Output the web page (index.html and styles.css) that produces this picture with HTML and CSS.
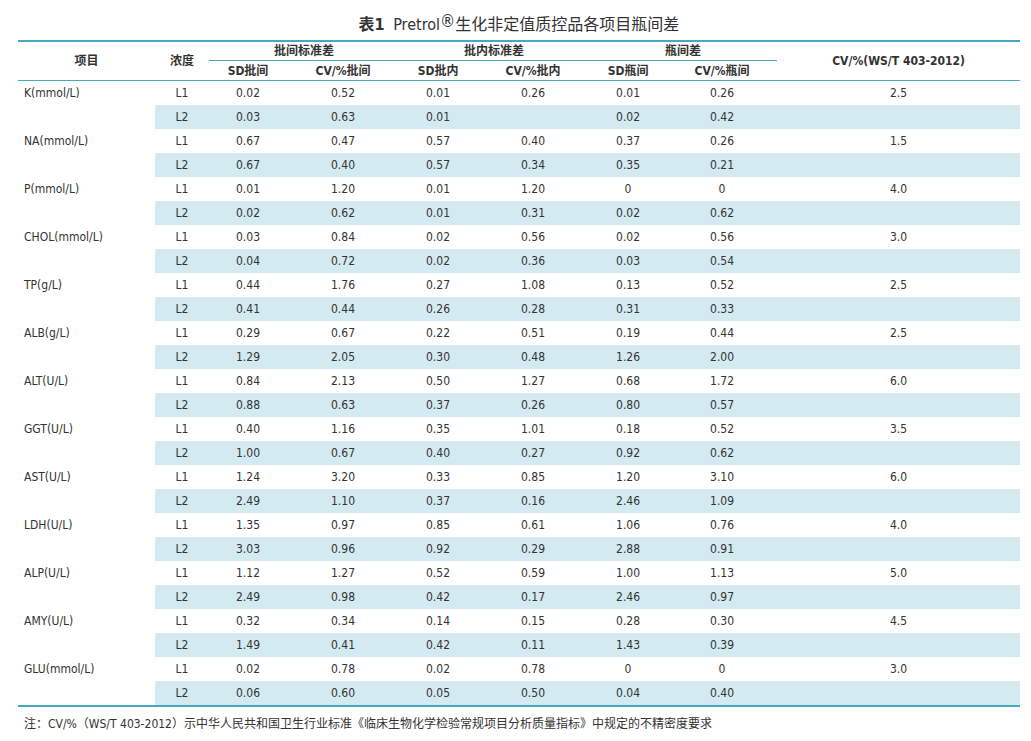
FILE: index.html
```html
<!DOCTYPE html>
<html lang="zh-CN">
<head>
<meta charset="utf-8">
<title>表1 Pretrol生化非定值质控品各项目瓶间差</title>
<link rel="stylesheet" href="styles.css">
</head>
<body>
<div class="page">
  <h1 class="title"><b class="tno">表1</b> Pretrol<span class="reg">®</span>生化非定值质控品各项目瓶间差</h1>
  <table class="data">
    <colgroup>
      <col class="c-item"><col class="c-lv"><col class="c-sd"><col class="c-cv"><col class="c-sd"><col class="c-cv"><col class="c-sd"><col class="c-cv2"><col class="c-std">
    </colgroup>
    <thead>
      <tr class="h1">
        <th rowspan="2">项目</th>
        <th rowspan="2">浓度</th>
        <th colspan="2" class="grp">批间标准差</th>
        <th colspan="2" class="grp">批内标准差</th>
        <th colspan="2" class="grp">瓶间差</th>
        <th rowspan="2">CV/%(WS/T 403-2012)</th>
      </tr>
      <tr class="h2">
        <th>SD批间</th><th>CV/%批间</th><th>SD批内</th><th>CV/%批内</th><th>SD瓶间</th><th>CV/%瓶间</th>
      </tr>
    </thead>
    <tbody>
      <tr><td rowspan="2" class="item">K(mmol/L)</td><td>L1</td><td>0.02</td><td>0.52</td><td>0.01</td><td>0.26</td><td>0.01</td><td>0.26</td><td>2.5</td></tr>
      <tr class="alt"><td>L2</td><td>0.03</td><td>0.63</td><td>0.01</td><td></td><td>0.02</td><td>0.42</td><td></td></tr>
      <tr><td rowspan="2" class="item">NA(mmol/L)</td><td>L1</td><td>0.67</td><td>0.47</td><td>0.57</td><td>0.40</td><td>0.37</td><td>0.26</td><td>1.5</td></tr>
      <tr class="alt"><td>L2</td><td>0.67</td><td>0.40</td><td>0.57</td><td>0.34</td><td>0.35</td><td>0.21</td><td></td></tr>
      <tr><td rowspan="2" class="item">P(mmol/L)</td><td>L1</td><td>0.01</td><td>1.20</td><td>0.01</td><td>1.20</td><td>0</td><td>0</td><td>4.0</td></tr>
      <tr class="alt"><td>L2</td><td>0.02</td><td>0.62</td><td>0.01</td><td>0.31</td><td>0.02</td><td>0.62</td><td></td></tr>
      <tr><td rowspan="2" class="item">CHOL(mmol/L)</td><td>L1</td><td>0.03</td><td>0.84</td><td>0.02</td><td>0.56</td><td>0.02</td><td>0.56</td><td>3.0</td></tr>
      <tr class="alt"><td>L2</td><td>0.04</td><td>0.72</td><td>0.02</td><td>0.36</td><td>0.03</td><td>0.54</td><td></td></tr>
      <tr><td rowspan="2" class="item">TP(g/L)</td><td>L1</td><td>0.44</td><td>1.76</td><td>0.27</td><td>1.08</td><td>0.13</td><td>0.52</td><td>2.5</td></tr>
      <tr class="alt"><td>L2</td><td>0.41</td><td>0.44</td><td>0.26</td><td>0.28</td><td>0.31</td><td>0.33</td><td></td></tr>
      <tr><td rowspan="2" class="item">ALB(g/L)</td><td>L1</td><td>0.29</td><td>0.67</td><td>0.22</td><td>0.51</td><td>0.19</td><td>0.44</td><td>2.5</td></tr>
      <tr class="alt"><td>L2</td><td>1.29</td><td>2.05</td><td>0.30</td><td>0.48</td><td>1.26</td><td>2.00</td><td></td></tr>
      <tr><td rowspan="2" class="item">ALT(U/L)</td><td>L1</td><td>0.84</td><td>2.13</td><td>0.50</td><td>1.27</td><td>0.68</td><td>1.72</td><td>6.0</td></tr>
      <tr class="alt"><td>L2</td><td>0.88</td><td>0.63</td><td>0.37</td><td>0.26</td><td>0.80</td><td>0.57</td><td></td></tr>
      <tr><td rowspan="2" class="item">GGT(U/L)</td><td>L1</td><td>0.40</td><td>1.16</td><td>0.35</td><td>1.01</td><td>0.18</td><td>0.52</td><td>3.5</td></tr>
      <tr class="alt"><td>L2</td><td>1.00</td><td>0.67</td><td>0.40</td><td>0.27</td><td>0.92</td><td>0.62</td><td></td></tr>
      <tr><td rowspan="2" class="item">AST(U/L)</td><td>L1</td><td>1.24</td><td>3.20</td><td>0.33</td><td>0.85</td><td>1.20</td><td>3.10</td><td>6.0</td></tr>
      <tr class="alt"><td>L2</td><td>2.49</td><td>1.10</td><td>0.37</td><td>0.16</td><td>2.46</td><td>1.09</td><td></td></tr>
      <tr><td rowspan="2" class="item">LDH(U/L)</td><td>L1</td><td>1.35</td><td>0.97</td><td>0.85</td><td>0.61</td><td>1.06</td><td>0.76</td><td>4.0</td></tr>
      <tr class="alt"><td>L2</td><td>3.03</td><td>0.96</td><td>0.92</td><td>0.29</td><td>2.88</td><td>0.91</td><td></td></tr>
      <tr><td rowspan="2" class="item">ALP(U/L)</td><td>L1</td><td>1.12</td><td>1.27</td><td>0.52</td><td>0.59</td><td>1.00</td><td>1.13</td><td>5.0</td></tr>
      <tr class="alt"><td>L2</td><td>2.49</td><td>0.98</td><td>0.42</td><td>0.17</td><td>2.46</td><td>0.97</td><td></td></tr>
      <tr><td rowspan="2" class="item">AMY(U/L)</td><td>L1</td><td>0.32</td><td>0.34</td><td>0.14</td><td>0.15</td><td>0.28</td><td>0.30</td><td>4.5</td></tr>
      <tr class="alt"><td>L2</td><td>1.49</td><td>0.41</td><td>0.42</td><td>0.11</td><td>1.43</td><td>0.39</td><td></td></tr>
      <tr><td rowspan="2" class="item">GLU(mmol/L)</td><td>L1</td><td>0.02</td><td>0.78</td><td>0.02</td><td>0.78</td><td>0</td><td>0</td><td>3.0</td></tr>
      <tr class="alt"><td>L2</td><td>0.06</td><td>0.60</td><td>0.05</td><td>0.50</td><td>0.04</td><td>0.40</td><td></td></tr>
    </tbody>
  </table>
  <p class="note">注：CV/%（WS/T 403-2012）示中华人民共和国卫生行业标准《临床生物化学检验常规项目分析质量指标》中规定的不精密度要求</p>
</div>
</body>
</html>
```
FILE: styles.css
```css
html, body {
  margin: 0;
  padding: 0;
  background: #ffffff;
}
body {
  font-family: "DejaVu Sans Condensed", "DejaVu Sans", "Noto Sans CJK SC", sans-serif;
  font-size: 12px;
  color: #333333;
}
.page {
  padding: 0 11px 0 18px;
}
.title {
  margin: 0;
  padding-top: 10px;
  height: 30px;
  line-height: 30px;
  font-size: 16px;
  font-weight: normal;
  text-align: center;
  color: #333333;
  white-space: nowrap;
}
.tno {
  font-weight: bold;
  margin-right: 4px;
}
.reg {
  font-size: 17px;
  vertical-align: 3px;
  line-height: 0;
}
.data {
  width: 1002px;
  table-layout: fixed;
  border-collapse: collapse;
  border-top: 2px solid #45a9c1;
  border-bottom: 2px solid #45a9c1;
}
.c-item { width: 137px; }
.c-lv { width: 54px; }
.c-sd { width: 78px; }
.c-cv { width: 112px; }
.c-cv2 { width: 110px; }
.c-std { width: 243px; }
.data th {
  font-weight: bold;
  color: #333333;
  padding: 0;
  text-align: center;
  vertical-align: middle;
  line-height: 16px;
}
.h1 th { height: 18px; }
.h2 th {
  height: 19px;
  border-bottom: 1px solid #45a9c1;
}
.h1 th[rowspan] { border-bottom: 1px solid #45a9c1; }
.h1 th.grp { border-bottom: 1px solid #45a9c1; }
.data td {
  height: 24px;
  padding: 0;
  text-align: center;
  vertical-align: middle;
  line-height: 24px;
}
.data td.item {
  text-align: left;
  vertical-align: top;
  padding-left: 6px;
  background: #ffffff;
}
.data tr.alt td {
  background: #d4eaf1;
}
.note {
  margin: 0;
  padding: 7px 0 0 6px;
  line-height: 20px;
  font-size: 12px;
  color: #333333;
  white-space: nowrap;
}
```
